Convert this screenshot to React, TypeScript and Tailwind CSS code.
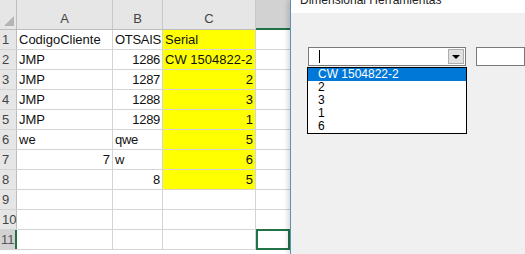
import React from "react";

type Cell = { v: string; right?: boolean };

const rows: Cell[][] = [
  [{ v: "CodigoCliente" }, { v: "OTSAIS" }, { v: "Serial" }],
  [{ v: "JMP" }, { v: "1286", right: true }, { v: "CW 1504822-2" }],
  [{ v: "JMP" }, { v: "1287", right: true }, { v: "2", right: true }],
  [{ v: "JMP" }, { v: "1288", right: true }, { v: "3", right: true }],
  [{ v: "JMP" }, { v: "1289", right: true }, { v: "1", right: true }],
  [{ v: "we" }, { v: "qwe" }, { v: "5", right: true }],
  [{ v: "7", right: true }, { v: "w" }, { v: "6", right: true }],
  [{ v: "" }, { v: "8", right: true }, { v: "5", right: true }],
  [{ v: "" }, { v: "" }, { v: "" }],
  [{ v: "" }, { v: "" }, { v: "" }],
  [{ v: "" }, { v: "" }, { v: "" }],
];

const Sheet = () => (
  <div className="w-[290px] shrink-0 bg-white font-['Liberation_Sans',sans-serif] text-[13px] text-[#111]">
    <div className="flex h-[30px] border-b border-[#bdbdbd] bg-[#e6e6e6] text-[#444]">
      <div className="relative w-[17px] border-r border-[#bdbdbd]">
        <div className="absolute bottom-[3px] right-[2px] h-0 w-0 border-b-[10px] border-l-[10px] border-b-[#b4b4b4] border-l-transparent" />
      </div>
      <div className="flex w-[96px] items-center justify-center border-r border-[#c8c8c8] pt-[8px]">A</div>
      <div className="flex w-[50px] items-center justify-center border-r border-[#c8c8c8] pt-[8px]">B</div>
      <div className="flex w-[93px] items-center justify-center border-r border-[#c8c8c8] pt-[8px]">C</div>
      <div className="-mb-px w-[34px] border-b-2 border-[#217346] bg-[#d2d2d2]" />
    </div>
    {rows.map((r, i) => {
      const sel = i === 10;
      return (
        <div key={i} className="flex h-[20px] border-b border-[#d4d4d4]">
          <div
            className={
              sel
                ? "w-[17px] border-r-2 border-[#217346] bg-[#d2d2d2] pl-[1px] leading-[19px] text-[#555]"
                : "w-[17px] border-r border-[#bdbdbd] bg-[#e6e6e6] pl-[2px] leading-[19px] text-[#444]"
            }
          >
            {i + 1}
          </div>
          {r.map((c, j) => (
            <div
              key={j}
              className={[
                j === 0 ? "w-[96px]" : j === 1 ? "w-[50px]" : "w-[93px]",
                j === 2 && i < 8 ? "bg-[#ffff00]" : "",
                c.right ? "text-right" : "text-left",
                "overflow-hidden whitespace-nowrap border-r border-[#d4d4d4] px-[2px] leading-[19px]",
                j === 1 ? "tracking-[-0.3px]" : "",
              ].join(" ")}
            >
              {c.v}
            </div>
          ))}
          <div className={sel ? "-mt-px h-[21px] w-[34px] border-2 border-[#217346]" : "w-[34px]"} />
        </div>
      );
    })}
  </div>
);

const items = ["CW 1504822-2", "2", "3", "1", "6"];

const Dialog = () => (
  <div className="relative flex-1 border-l border-[#5b8fb3] bg-[#f0f0f0] font-['Liberation_Sans',sans-serif] shadow-[-3px_0_4px_rgba(0,0,0,0.12)]">
    <div className="h-[13px] overflow-hidden bg-white">
      <div className="-mt-[8px] pl-[9px] text-[12px] leading-[16px] text-[#222]">Dimensional Herramientas</div>
    </div>
    <div className="flex gap-[10px] pl-[17px] pt-[34px]">
      <div className="relative">
        <div className="flex h-[19px] w-[158px] items-center border border-[#7a7a7a] bg-white">
          <div className="ml-[10px] h-[13px] w-px bg-black" />
          <div className="ml-auto mr-[1px] flex h-[15px] w-[16px] items-center justify-center border border-[#adadad] bg-[#e1e1e1]">
            <div className="h-0 w-0 border-x-[4px] border-t-[4px] border-x-transparent border-t-black" />
          </div>
        </div>
        <div className="absolute left-[-1px] top-[20px] w-[160px] border border-black bg-white text-[12px] leading-[13px] text-black">
          {items.map((t, k) => (
            <div key={k} className={k === 0 ? "bg-[#0078d7] pl-[10px] text-white" : "pl-[10px]"}>
              {t}
            </div>
          ))}
        </div>
      </div>
      <div className="h-[19px] flex-1 border border-[#7a7a7a] bg-white" />
    </div>
  </div>
);

export default function App() {
  return (
    <div className="flex h-[254px] w-[525px] overflow-hidden">
      <Sheet />
      <Dialog />
    </div>
  );
}
